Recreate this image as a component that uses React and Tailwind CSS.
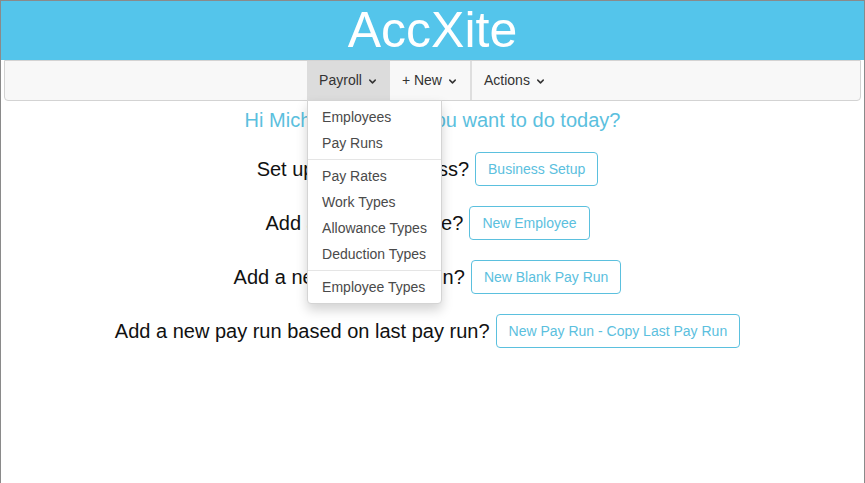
import { ChevronDown } from "lucide-react";

const font = { fontFamily: '"Liberation Sans", Arial, sans-serif' };

const btnClass =
  "h-[34px] rounded-[4px] border border-[#5bc0de] bg-white px-[12px] text-[14px] leading-[20px] text-[#5bc0de]";

const rows = [
  { q: "Set up a new business?", label: "Business Setup" },
  { q: "Add a new employee?", label: "New Employee" },
  { q: "Add a new blank pay run?", label: "New Blank Pay Run" },
  { q: "Add a new pay run based on last pay run?", label: "New Pay Run - Copy Last Pay Run" },
];

function NavItem({ label, active = false, divider = false, children }) {
  return (
    <div
      className={
        "relative flex h-full items-center gap-[5px] pl-[12px] pr-[12px] text-[14px] text-[#333] " +
        (active ? "bg-[#dcdcdc] " : "") +
        (divider ? "border-l-2 border-[#dedede]" : "")
      }
    >
      <span>{label}</span>
      <ChevronDown size={11} strokeWidth={3.2} className="mt-[1px] text-[#333]" />
      {children}
    </div>
  );
}

function PayrollMenu() {
  const groups = [
    ["Employees", "Pay Runs"],
    ["Pay Rates", "Work Types", "Allowance Types", "Deduction Types"],
    ["Employee Types"],
  ];
  return (
    <div className="absolute left-0 top-[39px] z-10 w-[135px] whitespace-nowrap rounded-b-[4px] border border-[#d4d4d4] bg-white py-[3px] shadow-[0_6px_12px_rgba(0,0,0,0.175)]">
      {groups.map((g, gi) => (
        <div key={gi}>
          {gi > 0 && <div className="my-[3px] h-px bg-[#e5e5e5]" />}
          {g.map((item) => (
            <div key={item} className="flex h-[26px] items-center pl-[14px] text-[14px] text-[#4a4a4a]">
              {item}
            </div>
          ))}
        </div>
      ))}
    </div>
  );
}

export default function App() {
  return (
    <div style={font} className="h-[483px] w-full overflow-hidden border-x border-t border-[#8a8a8a] bg-white">
      <header className="flex h-[59px] items-center justify-center bg-[#54c5eb]">
        <h1 className="text-[50px] leading-[59px] text-white">AccXite</h1>
      </header>

      <div className="px-[3px]">
        <nav className="flex h-[41px] justify-center rounded-b-[4px] border border-[#d3d3d3] bg-[#f8f8f8]">
          <NavItem label="Payroll" active>
            <PayrollMenu />
          </NavItem>
          <NavItem label="+ New" />
          <NavItem label="Actions" divider />
        </nav>
      </div>

      <main className="flex flex-col items-center">
        <p className="mt-[5px] h-[28px] text-[20px] leading-[28px] text-[#5bc0de]">
          Hi Michael, what do you want to do today?
        </p>
        <div className="mt-[18px] flex flex-col items-center gap-[20px]">
          {rows.map((r) => (
            <div key={r.label} className="flex items-center gap-[6px] pr-[10px]">
              <span className="text-[20px] leading-[28px] text-[#111]">{r.q}</span>
              <button className={btnClass}>{r.label}</button>
            </div>
          ))}
        </div>
      </main>
    </div>
  );
}
